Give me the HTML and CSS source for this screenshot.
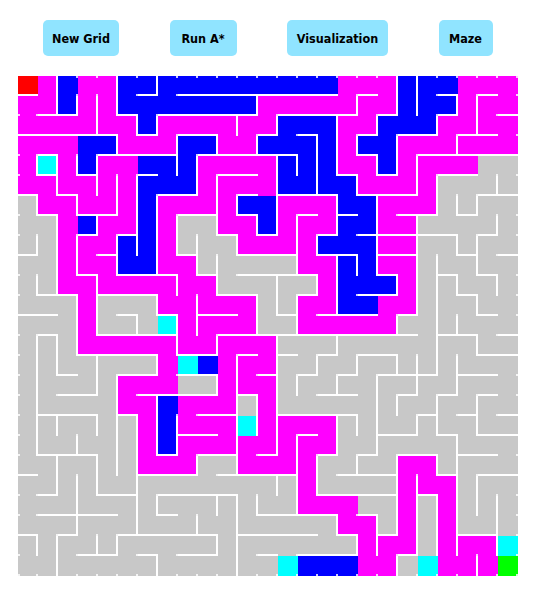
FILE: index.html
```html
<!DOCTYPE html>
<html lang="en">

<head>
    <meta charset="UTF-8">
    <meta name="viewport" content="width=device-width, initial-scale=1.0">
    <title>Maze A*</title>
    <link rel="stylesheet" href="styles.css">
</head>

<body>

    <div class="toolbar">
        <button type="button" class="btn btn-new">New Grid</button>
        <button type="button" class="btn btn-run">Run A*</button>
        <button type="button" class="btn btn-vis">Visualization</button>
        <button type="button" class="btn btn-maze">Maze</button>
    </div>

    <div id="grid" class="grid"></div>

    <script src="maze.js"></script>
</body>

</html>
```

FILE: styles.css
```css
body {
    font-family: "DejaVu Sans Condensed", "DejaVu Sans", sans-serif;
    margin: 0;
    padding: 0;
    background-color: #fff;
}

.toolbar {
    display: flex;
    gap: 50.5px;
    padding: 20px 0 20px 43px;
}

.btn {
    height: 36px;
    padding: 0;
    font-family: inherit;
    font-size: 12.5px;
    font-weight: bold;
    color: #000;
    background-color: #90e4ff;
    border: none;
    border-radius: 5px;
    cursor: pointer;
}

.btn-new {
    width: 76px;
}

.btn-run {
    width: 67px;
}

.btn-vis {
    width: 101px;
}

.btn-maze {
    width: 54px;
}

.grid {
    display: grid;
    grid-template-columns: repeat(25, 20px);
    grid-auto-rows: 20px;
    margin-left: 18px;
    width: 500px;
}

.cell {
    --nub: linear-gradient(rgba(255, 255, 255, 0.8), rgba(255, 255, 255, 0.8));
    box-sizing: border-box;
    border: 0 solid #fff;
    background-image: var(--nub);
    background-origin: border-box;
    background-position: right bottom;
    background-size: 2px 2px;
    background-repeat: no-repeat;
}

.first-row {
    background-image: var(--nub), var(--nub);
    background-position: right bottom, right top;
}

.first-col {
    background-image: var(--nub), var(--nub);
    background-position: right bottom, left bottom;
}

.wall-r {
    border-right-width: 2px;
}

.wall-b {
    border-bottom-width: 2px;
}

.unseen {
    background-color: #c8c8c8;
}

.closed {
    background-color: #f0f;
}

.visited {
    background-color: #00f;
}

.frontier {
    background-color: #0ff;
}

.start {
    background-color: #f00;
}

.end {
    background-color: #0f0;
}
```

FILE: maze.js
```js
var kinds = { g: 'unseen', m: 'closed', b: 'visited', c: 'frontier', r: 'start', l: 'end' };

var colours = [
    'rmbmmbbbbbbbbbbbmmmbbbmmm',
    'mmbmmbbbbbbbmmmmmmmbbbmmm',
    'mmmmmmbmmmmmmbbbmmbbbmmmm',
    'mmmbbmmmbbmmbbbbmbbmmmmmm',
    'mcmbmmbbbmmmmbbbmmbmmmmgg',
    'mmmmmmbbbmmmmbbbbmmmmgggg',
    'gmmmmmbmmmmbbmmmbbmmmgggg',
    'ggmbmmbmggmmbmmmbbmmggggg',
    'ggmmmbbmgggmmmmbbbmmggggg',
    'ggmmmbbmmgggggmmbbmmggggg',
    'ggmmmmmmmmgggggmbbbmggggg',
    'gggmgggmmmmmggmmbbmmggggg',
    'gggmgggcmmmmggmmmmmgggggg',
    'gggmmmmmmmmmmgggggggggggg',
    'gggggggmcbmmmgggggggggggg',
    'gggggmmmggmmmgggggggggggg',
    'gggggmmbmmmgmgggggggggggg',
    'ggggggmbmmmcmmmmggggggggg',
    'ggggggmbmmmmmmmmggggggggg',
    'ggggggmmmggmmmmggggmmgggg',
    'ggggggggggggggmggggmmmggg',
    'ggggggggggggggmmmggmgmggg',
    'ggggggggggggggggmmgmgmggg',
    'gggggggggggggggggmmmgmmmc',
    'gggggggggggggcbbbmmgcmmml'
];

// walls on the right side of each cell, per row
var rightWalls = [
    [1, 4, 6, 18, 19],
    [1, 2, 3, 4, 11, 16, 18, 19, 21, 22],
    [3, 5, 6, 10, 12, 15, 17, 20, 22],
    [4, 7, 9, 11, 14, 15, 16, 18, 21],
    [0, 1, 2, 3, 7, 8, 12, 13, 14, 15, 17, 18, 19],
    [1, 3, 4, 5, 8, 9, 12, 14, 16, 19, 20, 23],
    [0, 2, 4, 5, 6, 9, 10, 12, 15, 17, 20, 21, 22],
    [1, 3, 5, 6, 7, 9, 11, 12, 13, 15, 17, 19, 23],
    [0, 1, 2, 4, 5, 6, 7, 8, 10, 13, 14, 17, 19, 21, 22],
    [1, 2, 4, 6, 8, 9, 13, 15, 16, 17, 19, 20, 22],
    [0, 1, 3, 7, 9, 12, 14, 15, 18, 19, 20, 21, 23],
    [2, 3, 6, 8, 11, 12, 13, 15, 19, 20, 22],
    [2, 3, 5, 7, 8, 11, 13, 18, 20, 21],
    [0, 1, 2, 7, 9, 12, 15, 20, 22],
    [0, 1, 3, 6, 10, 12, 14, 16, 18, 19, 20, 21],
    [0, 3, 4, 9, 10, 12, 13, 15, 17, 19, 21],
    [0, 4, 6, 10, 11, 12, 17, 18, 20, 22],
    [0, 1, 3, 4, 5, 6, 7, 10, 11, 12, 15, 16, 17, 19, 20, 22],
    [0, 2, 4, 5, 6, 7, 10, 12, 13, 15, 17, 21],
    [1, 3, 4, 5, 8, 10, 13, 14, 16, 18, 20, 21],
    [1, 2, 3, 5, 12, 13, 14, 18, 19, 21, 22],
    [2, 5, 6, 9, 10, 11, 13, 18, 19, 20, 21, 22, 23],
    [2, 5, 8, 10, 15, 17, 18, 19, 20, 21, 23],
    [0, 1, 3, 4, 9, 10, 16, 17, 19, 20, 21, 23],
    [1, 6, 10, 18, 22]
];

// walls under each cell, per row
var bottomWalls = [
    [0, 6, 8, 9, 10, 11, 12, 13, 14, 15, 17, 21, 23],
    [1, 2, 5, 7, 8, 9, 10, 11, 13, 14, 15, 16, 18, 21, 24],
    [0, 1, 2, 3, 4, 6, 8, 9, 12, 14, 17, 19, 20, 22, 23],
    [1, 4, 5, 6, 7, 9, 10, 11, 12, 13, 17, 20, 21, 22, 23, 24],
    [1, 3, 6, 10, 11, 16, 18, 21, 22],
    [0, 2, 7, 8, 11, 13, 14, 15, 17, 18, 19, 23, 24],
    [1, 3, 4, 8, 9, 11, 14, 16, 19, 20, 22],
    [3, 5, 10, 12, 15, 17, 18, 19, 20, 21, 23],
    [0, 4, 8, 11, 12, 13, 15, 16, 18, 19, 22, 24],
    [3, 5, 6, 7, 9, 11, 12, 13, 14, 18, 21, 23],
    [1, 2, 4, 5, 6, 10, 11, 14, 17, 18, 22],
    [0, 1, 5, 7, 9, 10, 13, 15, 16, 17, 19, 23],
    [1, 4, 5, 6, 7, 10, 11, 12, 13, 14, 15, 16, 17, 18, 19, 21, 22, 24],
    [3, 4, 5, 6, 8, 9, 11, 13, 15, 17, 18, 23, 24],
    [2, 5, 6, 8, 9, 12, 14, 16, 18, 19, 20, 22, 23],
    [2, 3, 6, 7, 8, 9, 11, 15, 16, 19, 21, 23],
    [1, 2, 3, 5, 9, 10, 13, 14, 15, 16, 20, 22, 24],
    [8, 9, 14, 18, 19, 21, 23, 24],
    [1, 2, 3, 7, 9, 10, 12, 15, 17, 19, 20, 22, 23],
    [0, 6, 7, 8, 10, 11, 12, 13, 16, 17, 18, 21, 23, 24],
    [1, 4, 5, 7, 8, 9, 10, 15, 16, 17, 18, 20],
    [1, 2, 3, 4, 7, 12, 13, 14, 15, 17],
    [0, 2, 5, 6, 7, 8, 9, 11, 12, 13, 14, 16, 18, 22, 23],
    [3, 4, 6, 8, 9, 12, 14, 15, 16, 19],
    []
];

var grid = document.getElementById('grid');

for (var row = 0; row < 25; row++) {
    for (var col = 0; col < 25; col++) {
        var cell = document.createElement('div');
        cell.className = 'cell ' + kinds[colours[row][col]];
        if (row === 0) {
            cell.classList.add('first-row');
        }
        if (col === 0) {
            cell.classList.add('first-col');
        }
        if (rightWalls[row].indexOf(col) !== -1) {
            cell.classList.add('wall-r');
        }
        if (bottomWalls[row].indexOf(col) !== -1) {
            cell.classList.add('wall-b');
        }
        grid.appendChild(cell);
    }
}
```
